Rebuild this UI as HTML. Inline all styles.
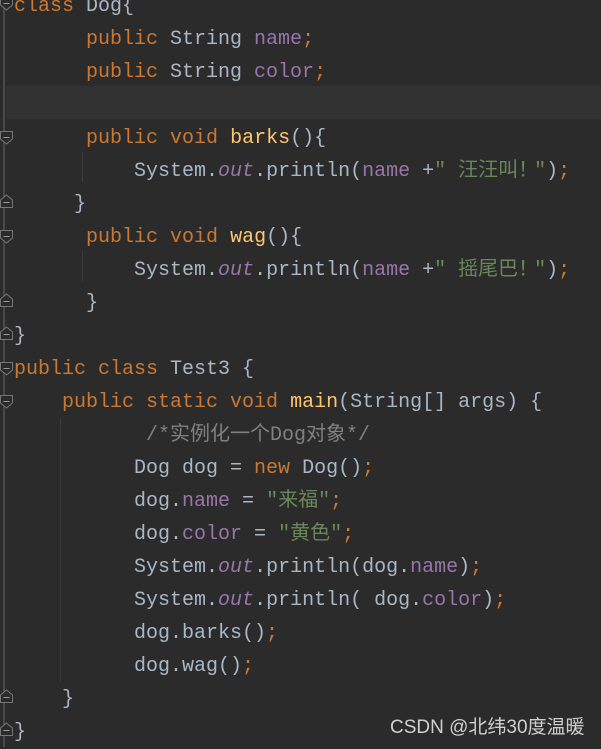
<!DOCTYPE html>
<html><head><meta charset="utf-8"><style>
html,body{margin:0;padding:0;}
body{width:601px;height:747px;background:#2b2b2b;position:relative;overflow:hidden;
font-family:"Liberation Mono","Noto Sans CJK SC",monospace;font-size:20px;color:#a9b7c6;}
.l{position:absolute;left:14px;height:33px;line-height:33px;white-space:pre;margin-top:2px;}
.k{color:#cc7832}.f{color:#9876aa}.m{color:#ffc66d}.s{color:#6a8759}.c{color:#808080}.o{color:#9876aa;font-style:italic}
.cur{position:absolute;left:6px;right:0;top:86px;height:33px;background:#323232;}
.g{position:absolute;left:3px;top:0;width:2px;height:747px;background:#4a4a4a;}
.ig{position:absolute;width:1px;background:#3b3b3b;}
.wm{position:absolute;left:390px;top:712px;font-family:"Liberation Sans","Noto Sans CJK SC",sans-serif;font-size:19px;color:#cfcfcf;white-space:nowrap;}
svg.fm{position:absolute;left:0;width:13px;height:14px;}
.n{letter-spacing:-4px}
</style></head><body>
<div class="cur"></div>
<div class="g"></div>
<div class="ig" style="left:82px;top:152px;height:30px"></div>
<div class="ig" style="left:82px;top:251px;height:30px"></div>
<div class="ig" style="left:60px;top:418px;height:264px"></div>

<svg class="fm" style="top:-3px"><path d="M0.5 0.5H12.5V8L6.5 13L0.5 8Z" fill="#2b2b2b" stroke="#777"/><path d="M3.5 6.5H9.5" stroke="#999"/></svg>
<svg class="fm" style="top:131px"><path d="M0.5 0.5H12.5V8L6.5 13L0.5 8Z" fill="#2b2b2b" stroke="#777"/><path d="M3.5 6.5H9.5" stroke="#999"/></svg>
<svg class="fm" style="top:194px"><path d="M0.5 13.5H12.5V6L6.5 1L0.5 6Z" fill="#2b2b2b" stroke="#777"/><path d="M3.5 8.5H9.5" stroke="#999"/></svg>
<svg class="fm" style="top:230px"><path d="M0.5 0.5H12.5V8L6.5 13L0.5 8Z" fill="#2b2b2b" stroke="#777"/><path d="M3.5 6.5H9.5" stroke="#999"/></svg>
<svg class="fm" style="top:293px"><path d="M0.5 13.5H12.5V6L6.5 1L0.5 6Z" fill="#2b2b2b" stroke="#777"/><path d="M3.5 8.5H9.5" stroke="#999"/></svg>
<svg class="fm" style="top:326px"><path d="M0.5 13.5H12.5V6L6.5 1L0.5 6Z" fill="#2b2b2b" stroke="#777"/><path d="M3.5 8.5H9.5" stroke="#999"/></svg>
<svg class="fm" style="top:362px"><path d="M0.5 0.5H12.5V8L6.5 13L0.5 8Z" fill="#2b2b2b" stroke="#777"/><path d="M3.5 6.5H9.5" stroke="#999"/></svg>
<svg class="fm" style="top:395px"><path d="M0.5 0.5H12.5V8L6.5 13L0.5 8Z" fill="#2b2b2b" stroke="#777"/><path d="M3.5 6.5H9.5" stroke="#999"/></svg>
<svg class="fm" style="top:689px"><path d="M0.5 13.5H12.5V6L6.5 1L0.5 6Z" fill="#2b2b2b" stroke="#777"/><path d="M3.5 8.5H9.5" stroke="#999"/></svg>
<svg class="fm" style="top:722px"><path d="M0.5 13.5H12.5V6L6.5 1L0.5 6Z" fill="#2b2b2b" stroke="#777"/><path d="M3.5 8.5H9.5" stroke="#999"/></svg>

<div class="l" style="top:-12px"><span class="k">class</span> Dog{</div>
<div class="l" style="top:21px">      <span class="k">public</span> String <span class="f">name</span><span class="k">;</span></div>
<div class="l" style="top:54px">      <span class="k">public</span> String <span class="f">color</span><span class="k">;</span></div>
<div class="l" style="top:120px">      <span class="k">public void</span> <span class="m">barks</span>(){</div>
<div class="l" style="top:153px">          System.<span class="o">out</span>.println(<span class="f">name</span> +<span class="s">" 汪汪叫<span class="n">！</span>"</span>)<span class="k">;</span></div>
<div class="l" style="top:186px">     }</div>
<div class="l" style="top:219px">      <span class="k">public void</span> <span class="m">wag</span>(){</div>
<div class="l" style="top:252px">          System.<span class="o">out</span>.println(<span class="f">name</span> +<span class="s">" 摇尾巴<span class="n">！</span>"</span>)<span class="k">;</span></div>
<div class="l" style="top:285px">      }</div>
<div class="l" style="top:318px">}</div>
<div class="l" style="top:351px"><span class="k">public class</span> Test3 {</div>
<div class="l" style="top:384px">    <span class="k">public static void</span> <span class="m">main</span>(String[] args) {</div>
<div class="l" style="top:417px">           <span class="c">/*实例化一个Dog对象*/</span></div>
<div class="l" style="top:450px">          Dog dog = <span class="k">new</span> Dog()<span class="k">;</span></div>
<div class="l" style="top:483px">          dog.<span class="f">name</span> = <span class="s">"来福"</span><span class="k">;</span></div>
<div class="l" style="top:516px">          dog.<span class="f">color</span> = <span class="s">"黄色"</span><span class="k">;</span></div>
<div class="l" style="top:549px">          System.<span class="o">out</span>.println(dog.<span class="f">name</span>)<span class="k">;</span></div>
<div class="l" style="top:582px">          System.<span class="o">out</span>.println( dog.<span class="f">color</span>)<span class="k">;</span></div>
<div class="l" style="top:615px">          dog.barks()<span class="k">;</span></div>
<div class="l" style="top:648px">          dog.wag()<span class="k">;</span></div>
<div class="l" style="top:681px">    }</div>
<div class="l" style="top:714px">}</div>
<div class="wm">CSDN @北纬30度温暖</div>
</body></html>
